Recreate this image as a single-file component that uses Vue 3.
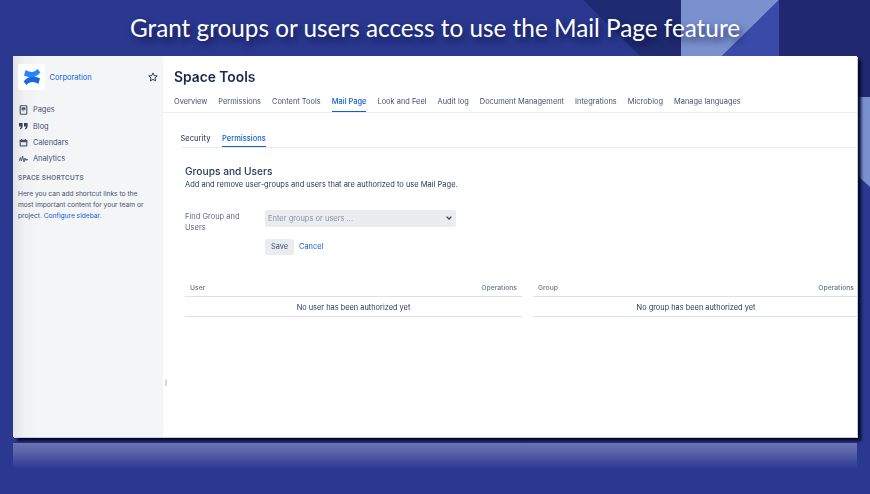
<script setup>
const navItems = [
  { label: 'Pages', icon: 'pages' },
  { label: 'Blog', icon: 'blog' },
  { label: 'Calendars', icon: 'cal' },
  { label: 'Analytics', icon: 'analytics' }
]
const tabs = ['Overview', 'Permissions', 'Content Tools', 'Mail Page', 'Look and Feel', 'Audit log', 'Document Management', 'Integrations', 'Microblog', 'Manage languages']
const tables = [
  { head: 'User', empty: 'No user has been authorized yet' },
  { head: 'Group', empty: 'No group has been authorized yet' }
]
</script>

<template>
  <div class="stage">
    <svg class="backdrop" width="870" height="494" viewBox="0 0 870 494" aria-hidden="true">
      <rect width="870" height="494" fill="#2a388f" />
      <polygon points="583,0 681,0 681,56 640,56" fill="#1f2b70" />
      <polygon points="681,0 779,0 722,56 681,56" fill="#7a91cf" />
      <polygon points="779,0 779,56 722,56" fill="#3a4aa8" />
      <rect x="779" width="91" height="97" fill="#20296f" />
      <polygon points="779,97 870,97 870,187 858,176 779,176" fill="#7a91cf" />
    </svg>
    <h1 class="headline">Grant groups or users access to use the Mail Page feature</h1>
    <div class="window">
      <aside class="sidebar">
        <div class="space">
          <div class="logo">
            <svg width="18" height="18" viewBox="0 0 18 18">
              <path d="M.6 13.4C5 8.6 9.5 7 17 10.4L15.4 16C10.5 13.4 7 13.2 3.6 17Z" fill="#1868db" />
              <path d="M17.4 4.6C13 9.4 8.5 11 1 7.6L2.6 2C7.5 4.6 11 4.8 14.4 1Z" fill="#2684ff" />
            </svg>
          </div>
          <span class="space-name">Corporation</span>
          <svg class="star" width="10" height="10" viewBox="0 0 10 10">
            <path d="M5 .9 6.2 3.6 9.2 3.9 7 5.9 7.6 8.9 5 7.4 2.4 8.9 3 5.9.8 3.9 3.8 3.6Z" fill="none" stroke="#2f3d58" stroke-width="1" stroke-linejoin="round" />
          </svg>
        </div>
        <nav class="side-nav">
          <div v-for="item in navItems" :key="item.label" class="side-item">
            <svg class="side-icon" width="9" height="10" viewBox="0 0 9 10">
              <template v-if="item.icon === 'pages'">
                <rect x="1.2" y=".8" width="6.6" height="8.4" rx=".8" fill="none" stroke="#42526e" stroke-width="1.1" />
                <path d="M2.8 2.8h3.4v1.6H2.8ZM2.8 5.8h2.6" fill="#42526e" stroke="#42526e" stroke-width=".6" />
              </template>
              <template v-else-if="item.icon === 'blog'">
                <path d="M0 2h3.6v3C3.6 7 2.6 8 1 8.4V7C1.6 6.8 2 6.2 2 5.4H0ZM5 2h3.6v3C8.6 7 7.6 8 6 8.4V7C6.6 6.8 7 6.2 7 5.4H5Z" fill="#344563" />
              </template>
              <template v-else-if="item.icon === 'cal'">
                <rect x=".6" y="1.8" width="7.8" height="6.8" rx=".8" fill="#42526e" />
                <rect x="1.7" y="4.2" width="5.6" height="3.2" fill="#e8eaee" />
                <path d="M2.5 1v1.4M6.5 1v1.4" stroke="#42526e" stroke-width="1" />
              </template>
              <template v-else>
                <path d="M0 7.5 1.4 3.5 2.4 7 3.6 2 5 8 6 4 7 6.5 7.6 5 9 6" fill="none" stroke="#42526e" stroke-width=".9" />
              </template>
            </svg>
            <span>{{ item.label }}</span>
          </div>
        </nav>
        <h2 class="shortcuts">SPACE SHORTCUTS</h2>
        <p class="help">Here you can add shortcut links to the most important content for your team or project. <a>Configure sidebar</a>.</p>
      </aside>
      <main class="content">
        <i class="grip"></i>
        <header class="page-head">
          <h2 class="page-title">Space Tools</h2>
          <div class="tabs">
            <span v-for="t in tabs" :key="t" class="tab" :class="{ active: t === 'Mail Page' }">{{ t }}</span>
          </div>
        </header>
        <div class="subtabs">
          <span class="subtab">Security</span>
          <span class="subtab active">Permissions</span>
        </div>
        <section class="panel">
          <h3 class="panel-title">Groups and Users</h3>
          <p class="panel-desc">Add and remove user-groups and users that are authorized to use Mail Page.</p>
          <div class="form-row">
            <label class="form-label">Find Group and Users</label>
            <div class="form-fields">
              <div class="select">
                <span>Enter groups or users ...</span>
                <svg width="6" height="4" viewBox="0 0 6 4"><path d="M.6.6 3 3 5.4.6" fill="none" stroke="#344563" stroke-width="1.3" /></svg>
              </div>
              <div class="actions">
                <button class="save" type="button">Save</button>
                <a class="cancel">Cancel</a>
              </div>
            </div>
          </div>
          <div class="tables">
            <div v-for="t in tables" :key="t.head" class="table">
              <div class="thead"><span>{{ t.head }}</span><span>Operations</span></div>
              <div class="tbody">{{ t.empty }}</div>
            </div>
          </div>
        </section>
      </main>
    </div>
    <div class="reflection"></div>
  </div>
</template>

<style>
html, body { margin: 0; padding: 0; background: #2a388f; overflow: hidden; }
</style>

<style scoped>
.stage {
  position: relative;
  width: 870px;
  height: 494px;
  overflow: hidden;
  display: flex;
  flex-direction: column;
  font-family: Inter, "Liberation Sans", sans-serif;
  color: #172b4d;
}
.backdrop { position: absolute; left: 0; top: 0; }
.headline {
  position: relative;
  margin: 0;
  height: 56px;
  line-height: 55px;
  text-align: center;
  font-family: Lato, "Open Sans", sans-serif;
  font-size: 24.3px;
  font-weight: 400;
  color: #fff;
  text-shadow: 3px 4px 7px rgba(8, 12, 60, .75);
  white-space: nowrap;
}
.window {
  position: relative;
  margin-left: 13px;
  width: 844px;
  height: 381px;
  flex: none;
  display: flex;
  background: #fff;
  box-shadow: 1px 1px 0 #c9ccd6, 4px 4px 3px #030722;
  filter: blur(.3px);
}
.sidebar {
  width: 150px;
  flex: none;
  box-sizing: border-box;
  padding: 8px 5px 0 5px;
  background: linear-gradient(90deg, #e2e3e5 0, #f1f2f4 12px, #f4f5f7 24px);
}
.space { display: flex; align-items: center; height: 26px; }
.logo {
  width: 27px;
  height: 26px;
  background: #fff;
  display: flex;
  align-items: center;
  justify-content: center;
  border-radius: 2px;
}
.space-name { margin-left: 4.5px; font-size: 7.5px; color: #0c5fd8; flex: 1; }
.side-nav { margin-top: 11.6px; }
.side-item {
  display: flex;
  align-items: center;
  height: 16.4px;
  font-size: 7.4px;
  color: #42526e;
}
.side-icon { margin-right: 5px; margin-left: 1px; flex: none; }
.shortcuts {
  margin: 5.6px 0 0;
  font-size: 6.4px;
  line-height: 10px;
  font-weight: 600;
  color: #5e6c84;
  letter-spacing: .25px;
}
.help {
  margin: 6.5px 0 0;
  max-width: 128px;
  font-size: 6.65px;
  line-height: 11px;
  color: #42526e;
}
.help a, .cancel { color: #0c5fd8; }
.content {
  position: relative;
  flex: 1;
  min-width: 0;
  overflow: hidden;
}
.grip {
  position: absolute;
  left: 2px;
  top: 323px;
  width: 2px;
  height: 7px;
  background: #d8dade;
}
.page-head { padding: 11px 0 0 11px; border-bottom: 1px solid #ebecf0; }
.page-title {
  margin: 0;
  font-size: 13.8px;
  line-height: 20px;
  font-weight: 600;
  color: #172b4d;
}
.tabs { display: flex; gap: 11px; margin-top: 9px; white-space: nowrap; }
.tab {
  font-size: 7.45px;
  line-height: 12px;
  padding-bottom: 3px;
  color: #42526e;
  border-bottom: 1.4px solid transparent;
}
.tab.active { color: #0c5fd8; font-weight: 500; border-bottom-color: #0c5fd8; }
.subtabs {
  display: flex;
  gap: 11.5px;
  margin: 20px 0 0 17.5px;
  border-bottom: 1px solid #ebecf0;
}
.subtab {
  font-size: 7.5px;
  line-height: 12px;
  padding-bottom: 1px;
  color: #42526e;
  font-weight: 500;
  border-bottom: 1.4px solid transparent;
}
.subtab.active { color: #0c5fd8; border-bottom-color: #0c5fd8; }
.panel { padding: 15.6px 0 0 22px; }
.panel-title {
  margin: 0 0 1px;
  font-size: 10.2px;
  line-height: 14px;
  font-weight: 500;
  color: #253858;
}
.panel-desc { margin: 0; font-size: 7.5px; line-height: 12px; color: #253858; }
.form-row { display: flex; margin-top: 19px; }
.form-label {
  box-sizing: border-box;
  width: 80px;
  flex: none;
  padding: 1px 20px 0 0;
  font-size: 7.5px;
  line-height: 11px;
  color: #5e6c84;
}
.form-fields { display: flex; flex-direction: column; gap: 12px; }
.select {
  box-sizing: border-box;
  width: 191px;
  height: 17px;
  padding: 0 4px 0 3px;
  display: flex;
  align-items: center;
  justify-content: space-between;
  background: #ebecf0;
  border-radius: 2px;
  font-size: 7.5px;
  color: #8993a4;
}
.actions { display: flex; align-items: center; gap: 5px; }
.save {
  box-sizing: border-box;
  width: 29px;
  height: 16px;
  padding: 0;
  border: 0;
  border-radius: 2px;
  background: #ebecf0;
  font: inherit;
  font-size: 7.4px;
  color: #42526e;
}
.cancel { font-size: 7.4px; }
.tables { display: flex; gap: 11px; margin-top: 25px; }
.table { flex: none; width: 337px; }
.table + .table { width: 326px; }
.thead {
  display: flex;
  justify-content: space-between;
  box-sizing: border-box;
  height: 17px;
  padding: 0 5px;
  font-size: 6.8px;
  line-height: 16px;
  font-weight: 500;
  color: #6b778c;
  border-bottom: 1.4px solid #dfe1e6;
}
.tbody {
  height: 19px;
  line-height: 21px;
  text-align: center;
  font-size: 7.4px;
  color: #253858;
  border-bottom: 1px solid #dfe1e6;
}
.reflection {
  position: relative;
  margin: 6px 0 0 13px;
  width: 844px;
  height: 26px;
  flex: none;
  background: linear-gradient(180deg, #6a72b1 0, #5d66ab 30%, #2a388f 100%);
}
</style>
